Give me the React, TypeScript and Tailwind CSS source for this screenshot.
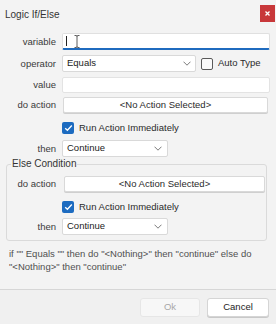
import React from "react";

const Chevron = () => (
  <svg width="8" height="5" viewBox="0 0 8 5">
    <path d="M0.5 0.7 L4 4.2 L7.5 0.7" fill="none" stroke="#6b6b6b" strokeWidth="0.9" />
  </svg>
);

const Checked = () => (
  <div className="w-[12px] h-[12px] rounded-[2px] bg-[#1c6bc0] flex items-center justify-center shrink-0">
    <svg width="9" height="8" viewBox="0 0 9 8">
      <path d="M1.2 4.2 L3.4 6.3 L7.8 1.5" fill="none" stroke="#ffffff" strokeWidth="1.3" />
    </svg>
  </div>
);

const Label = ({ children, w = "w-[56px]" }: { children: React.ReactNode; w?: string }) => (
  <div className={`${w} text-right text-[#3a3a3a] shrink-0 leading-none`}>{children}</div>
);

const ActionButton = () => (
  <div className="flex-1 h-full bg-white border border-[#d9d9d9] rounded-[2px] flex items-center justify-center text-[#2a2a2a] shadow-[0_1px_0_#cfcfcf]">
    &lt;No Action Selected&gt;
  </div>
);

const ThenSelect = () => (
  <div className="w-[106px] h-full bg-white border border-[#d9d9d9] rounded-[2px] flex items-center justify-between pl-[4px] pr-[5px] text-[#222]">
    <span>Continue</span>
    <Chevron />
  </div>
);

export default function App() {
  return (
    <div
      className="w-[276px] h-[324px] bg-[#f3f3f3] flex flex-col text-[9.5px] overflow-hidden"
      style={{ fontFamily: '"Liberation Sans", Arial, sans-serif' }}
    >
      {/* title bar */}
      <div className="h-[28px] flex items-start justify-between pl-[5px]">
        <div className="mt-[7px] text-[10px] text-[#333]">Logic If/Else</div>
        <div className="mt-[5px] mr-[1px] w-[15px] h-[17px] bg-[#c8383a] flex items-center justify-center">
          <svg width="5" height="5" viewBox="0 0 5 5">
            <path d="M0.5 0.5 L4.5 4.5 M4.5 0.5 L0.5 4.5" stroke="#fff" strokeWidth="1.3" />
          </svg>
        </div>
      </div>

      {/* variable */}
      <div className="mt-[5px] h-[17px] flex items-center">
        <Label>variable</Label>
        <div className="ml-[6px] w-[208px] h-full bg-white border border-[#e0e0e0] border-b-2 border-b-[#1f6bbf] rounded-[2px] relative flex items-center pl-[3px]">
          <div className="w-[1px] h-[10px] bg-[#222]" />
          <svg className="absolute left-[11px] top-[1px]" width="6" height="13" viewBox="0 0 6 13">
            <path d="M0.5 0.5 H2 Q3 0.5 3 1.5 Q3 0.5 4 0.5 H5.5 M3 1.5 V11.5 M0.5 12.5 H2 Q3 12.5 3 11.5 Q3 12.5 4 12.5 H5.5" fill="none" stroke="#333" strokeWidth="0.8" />
          </svg>
        </div>
      </div>

      {/* operator */}
      <div className="mt-[5px] h-[17px] flex items-center">
        <Label>operator</Label>
        <div className="ml-[6px] w-[134px] h-full bg-white border border-[#d9d9d9] rounded-[2px] flex items-center justify-between pl-[4px] pr-[4px] text-[#222]">
          <span>Equals</span>
          <Chevron />
        </div>
        <div className="ml-[5px] w-[12px] h-[12px] border border-[#5a5a5a] rounded-[2px] bg-[#fafafa]" />
        <span className="ml-[5px] text-[#2a2a2a]">Auto Type</span>
      </div>

      {/* value */}
      <div className="mt-[5px] h-[16px] flex items-center">
        <Label>value</Label>
        <div className="ml-[6px] w-[208px] h-full bg-white border border-[#e3e3e3] rounded-[2px]" />
      </div>

      {/* do action */}
      <div className="mt-[4px] h-[16px] flex items-center pr-[8px]">
        <Label>do action</Label>
        <div className="ml-[7px] flex-1 h-full flex">
          <ActionButton />
        </div>
      </div>

      {/* run action */}
      <div className="mt-[9px] h-[12px] flex items-center pl-[62px]">
        <Checked />
        <span className="ml-[5px] text-[#2a2a2a]">Run Action Immediately</span>
      </div>

      {/* then */}
      <div className="mt-[6px] h-[17px] flex items-center">
        <Label>then</Label>
        <div className="ml-[6px] h-full flex">
          <ThenSelect />
        </div>
      </div>

      {/* else group */}
      <fieldset className="mt-[1px] ml-[6px] mr-[9px] border border-[#dadada] rounded-[3px] pb-[5px]">
        <legend className="ml-[4px] px-[1px] text-[10px] leading-[12px] text-[#333]">Else Condition</legend>
        <div className="mt-[6px] h-[16px] flex items-center pr-[1px]">
          <Label w="w-[49px]">do action</Label>
          <div className="ml-[8px] flex-1 h-full flex">
            <ActionButton />
          </div>
        </div>
        <div className="mt-[9px] h-[12px] flex items-center pl-[55px]">
          <Checked />
          <span className="ml-[5px] text-[#2a2a2a]">Run Action Immediately</span>
        </div>
        <div className="mt-[5px] h-[17px] flex items-center">
          <Label w="w-[49px]">then</Label>
          <div className="ml-[6px] h-full flex">
            <ThenSelect />
          </div>
        </div>
      </fieldset>

      {/* summary */}
      <div className="mt-[6px] px-[9px] text-[#505050] leading-[13px] whitespace-nowrap">
        if "" Equals "" then do "&lt;Nothing&gt;" then "continue" else do
        <br />
        "&lt;Nothing&gt;" then "continue"
      </div>

      {/* footer */}
      <div className="mt-auto h-[35px] border-t border-[#d6d6d6] bg-[#f0f0f0] flex items-start justify-end pt-[8px] pr-[7px]">
        <div className="w-[60px] h-[19px] bg-[#f7f7f7] border border-[#e6e6e6] rounded-[3px] flex items-center justify-center text-[#a8a8a8]">
          Ok
        </div>
        <div className="ml-[7px] w-[62px] h-[19px] bg-white border border-[#d5d5d5] rounded-[3px] flex items-center justify-center text-[#222] shadow-[0_1px_0_#c8c8c8]">
          Cancel
        </div>
      </div>
    </div>
  );
}
